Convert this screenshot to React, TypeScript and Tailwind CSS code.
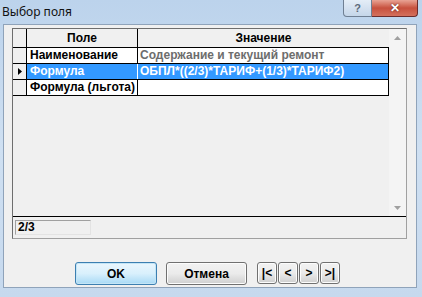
const rows = [
  { name: "Наименование", value: "Содержание и текущий ремонт", dim: true },
  { name: "Формула", value: "ОБПЛ*((2/3)*ТАРИФ+(1/3)*ТАРИФ2)", selected: true },
  { name: "Формула (льгота)", value: "" },
];

function TitleBar() {
  return (
    <div className="h-[24px] flex items-start justify-between shrink-0">
      <span className="mt-[3px] ml-[2px] text-[12px] font-normal text-[#111] font-['Noto_Sans',sans-serif]">Выбор поля</span>
      <div className="flex mr-[4px]">
        <div className="w-[29px] h-[17px] rounded-bl-[4px] border border-t-0 border-[#6f7f93] bg-gradient-to-b from-[#e4edf7] to-[#c5d6e9] flex items-center justify-center text-[11px] font-bold text-[#5d6a7a]">
          ?
        </div>
        <div className="w-[46px] h-[17px] rounded-br-[4px] border border-t-0 border-l-0 border-[#6b2c2c] bg-gradient-to-b from-[#e8a394] via-[#c7503d] to-[#d4705d] flex items-center justify-center text-[12px] font-bold text-white [text-shadow:0_0_2px_#4a1a12]">
          ✕
        </div>
      </div>
    </div>
  );
}

function Row({ name, value, selected, dim }: { name: string; value: string; selected?: boolean; dim?: boolean }) {
  const bg = selected ? "bg-[#3399ff]" : "bg-white";
  const nameColor = selected ? "text-white" : "text-black";
  const valueColor = selected ? "text-white" : dim ? "text-[#6d6d6d]" : "text-black";
  return (
    <div className="flex h-[16px] border-b border-black">
      <div className="w-[14px] border-r border-black bg-[#f0f0f0] flex items-center justify-center">
        {selected && (
          <svg width="4" height="7" viewBox="0 0 4 7">
            <path d="M0 0 L4 3.5 L0 7 Z" fill="#000" />
          </svg>
        )}
      </div>
      <div className={`w-[111px] border-r ${selected ? "border-white" : "border-black"} ${bg} ${nameColor} pl-[3px] leading-[15px] whitespace-nowrap overflow-hidden`}>
        {name}
      </div>
      <div className={`w-[251px] border-r border-black ${bg} ${valueColor} pl-[2px] leading-[15px] whitespace-nowrap overflow-hidden`}>
        {value}
      </div>
    </div>
  );
}

function ScrollBar() {
  return (
    <div className="w-[17px] flex flex-col justify-between bg-[#f4f4f4]">
      <div className="h-[17px] flex items-center justify-center">
        <svg width="7" height="4" viewBox="0 0 7 4">
          <path d="M0 4 L3.5 0 L7 4 Z" fill="#a0a0a0" />
        </svg>
      </div>
      <div className="h-[17px] flex items-center justify-center">
        <svg width="7" height="4" viewBox="0 0 7 4">
          <path d="M0 0 L3.5 4 L7 0 Z" fill="#a0a0a0" />
        </svg>
      </div>
    </div>
  );
}

export default function App() {
  return (
    <div className="w-[422px] h-[297px] flex flex-col bg-gradient-to-b from-[#bcd3ec] via-[#cfe0f2] to-[#c6d9ee] font-['Liberation_Sans',sans-serif] text-[12px] font-bold">
      <TitleBar />
      <div className="ml-[3px] mr-[5px] h-[264px] border border-[#8fa3ba] bg-[#f0f0f0] pl-[8px] pt-[3px] flex flex-col">
        <div className="w-[395px] h-[211px] border border-[#a0a0a0] border-t-[#6e6e6e] border-l-[#6e6e6e] flex flex-col">
          <div className="h-[188px] flex border-b border-black">
            <div className="w-[376px] flex flex-col bg-[#f0f0f0]">
              <div className="flex h-[19px] border-b border-black bg-[#f0f0f0]">
                <div className="w-[14px] border-r border-black" />
                <div className="w-[111px] border-r border-black flex items-center justify-center">Поле</div>
                <div className="w-[251px] flex items-center justify-center">Значение</div>
              </div>
              {rows.map((r) => (
                <Row key={r.name} {...r} />
              ))}
            </div>
            <ScrollBar />
          </div>
          <div className="flex-1 pt-[3px] pl-[2px]">
            <div className="w-[76px] h-[15px] border border-[#a0a0a0] border-r-[#e3e3e3] border-b-[#e3e3e3] pl-[2px] leading-[13px] bg-[#f0f0f0]">
              2/3
            </div>
          </div>
        </div>
        <div className="mt-[23px] ml-[63px] flex items-start">
          <button className="w-[82px] h-[23px] rounded-[3px] border border-[#3c7fb1] bg-gradient-to-b from-[#eaf6fd] via-[#d9f0fc] to-[#a7d9f5] shadow-[inset_0_0_0_1px_#c4e5f6]">
            OK
          </button>
          <button className="ml-[9px] w-[81px] h-[23px] rounded-[3px] border border-[#707070] bg-gradient-to-b from-[#f2f2f2] via-[#ebebeb] to-[#cfcfcf] shadow-[inset_0_0_0_1px_#fcfcfc]">
            Отмена
          </button>
          <div className="ml-[10px] flex gap-[1px]">
            {["|<", "<", ">", ">|"].map((t) => (
              <button
                key={t}
                className="w-[20px] h-[22px] rounded-[3px] border border-[#707070] bg-gradient-to-b from-[#f2f2f2] via-[#ebebeb] to-[#cfcfcf] shadow-[inset_0_0_0_1px_#fcfcfc] leading-none"
              >
                {t}
              </button>
            ))}
          </div>
        </div>
      </div>
    </div>
  );
}
